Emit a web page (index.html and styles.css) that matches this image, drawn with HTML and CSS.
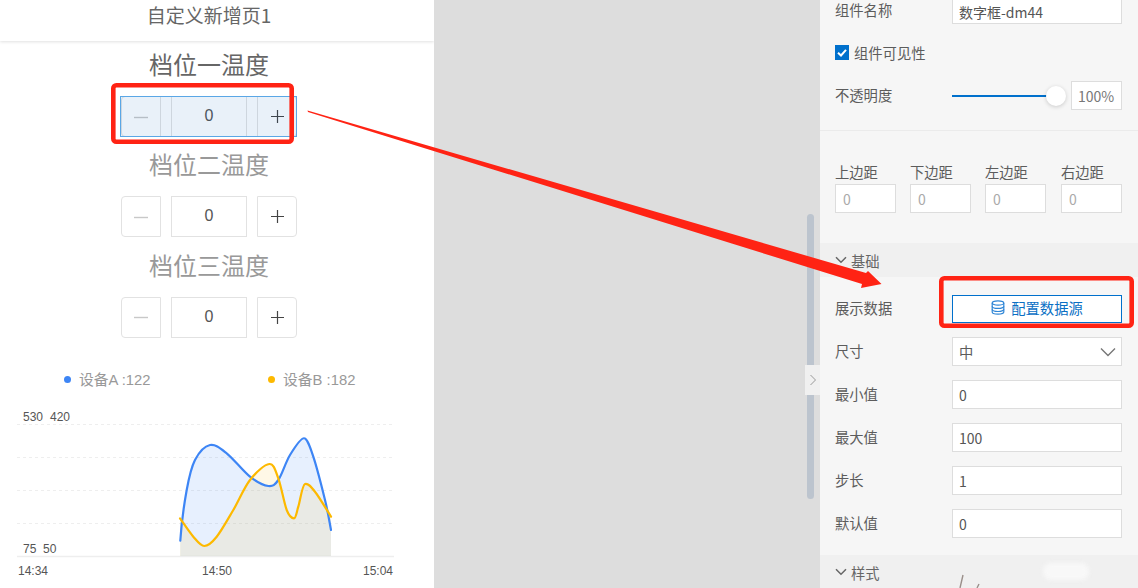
FILE: index.html
```html
<!DOCTYPE html>
<html lang="zh-CN">
<head>
<meta charset="utf-8">
<title>自定义新增页1</title>
<link rel="stylesheet" href="styles.css">
</head>
<body>
<div class="app">
  <main class="preview">
    <header class="title">自定义新增页1</header>
    <div class="form">
      <div class="item">
        <div class="item-label item-label-active">档位一温度</div>
        <div class="stepper">
          <button class="step step-minus"><svg width="14" height="14" viewBox="0 0 14 14"><path d="M0 7.5h14"/></svg></button>
          <input class="step-value" value="0" readonly>
          <button class="step step-plus"><svg width="13" height="13" viewBox="0 0 13 13"><path d="M0 6.5h13M6.5 0v13"/></svg></button>
          <span class="selected"></span>
        </div>
      </div>
      <div class="item">
        <div class="item-label">档位二温度</div>
        <div class="stepper">
          <button class="step step-minus"><svg width="14" height="14" viewBox="0 0 14 14"><path d="M0 7.5h14"/></svg></button>
          <input class="step-value" value="0" readonly>
          <button class="step step-plus"><svg width="13" height="13" viewBox="0 0 13 13"><path d="M0 6.5h13M6.5 0v13"/></svg></button>
        </div>
      </div>
      <div class="item">
        <div class="item-label">档位三温度</div>
        <div class="stepper">
          <button class="step step-minus"><svg width="14" height="14" viewBox="0 0 14 14"><path d="M0 7.5h14"/></svg></button>
          <input class="step-value" value="0" readonly>
          <button class="step step-plus"><svg width="13" height="13" viewBox="0 0 13 13"><path d="M0 6.5h13M6.5 0v13"/></svg></button>
        </div>
      </div>
    </div>
    <div class="legend">
      <div class="legend-item"><i class="dot dot-a"></i>设备A :122</div>
      <div class="legend-item"><i class="dot dot-b"></i>设备B :182</div>
    </div>
    <svg class="chart" viewBox="0 395 434 193" width="434" height="193">
      <g class="grid">
        <line x1="17" x2="394" y1="424.5" y2="424.5"/>
        <line x1="17" x2="394" y1="457.5" y2="457.5"/>
        <line x1="17" x2="394" y1="490.5" y2="490.5"/>
        <line x1="17" x2="394" y1="523.5" y2="523.5"/>
      </g>
      <line class="axis" x1="17" x2="394" y1="556.5" y2="556.5"/>
      <path class="area-a" d="M180.3 540.7C181.4 524 184.25 503.45 186.7 490C189.15 476.55 191.1 467.5 195 460C198.9 452.5 204.7 446.1 210 445C215.3 443.9 220 448 226.7 453.3C233.4 458.6 243.1 471.25 250 476.7C256.9 482.15 263.6 485.45 268.3 486C273 486.55 274.7 485.2 278.3 480C281.9 474.8 285.7 462 290 455C294.3 448 301 437.5 304.3 438.3C307.5 439 309.85 446.4 313.3 456.7C316.75 467 322 487.8 325 500C328 512 329.5 522 331 530L331 556L180.3 556Z"/>
      <path class="area-b" d="M180 518.3C184 524 189.3 532.1 193.3 536.7C197.3 541.3 200.4 546 204.3 546C208.2 546 211.9 542.7 216.7 536.7C221.5 530.7 227.75 519.45 233.3 510C238.85 500.55 244 487.7 250 480C256 472.3 264.6 464.3 269.3 464C274 463.7 275.4 470.6 278.3 478.3C281.2 486 284.1 503.3 286.7 510C289.3 516.7 292 518.3 294 518.3C296 518.3 296.5 512.4 298.3 506.7C300.1 501 302.2 485 305 484C307.8 483 310.7 486.25 315 491.7C319.3 497.15 325 507 331 516.7L331 556L180 556Z"/>
      <path class="line-a" d="M180.3 540.7C181.4 524 184.25 503.45 186.7 490C189.15 476.55 191.1 467.5 195 460C198.9 452.5 204.7 446.1 210 445C215.3 443.9 220 448 226.7 453.3C233.4 458.6 243.1 471.25 250 476.7C256.9 482.15 263.6 485.45 268.3 486C273 486.55 274.7 485.2 278.3 480C281.9 474.8 285.7 462 290 455C294.3 448 301 437.5 304.3 438.3C307.5 439 309.85 446.4 313.3 456.7C316.75 467 322 487.8 325 500C328 512 329.5 522 331 530"/>
      <path class="line-b" d="M180 518.3C184 524 189.3 532.1 193.3 536.7C197.3 541.3 200.4 546 204.3 546C208.2 546 211.9 542.7 216.7 536.7C221.5 530.7 227.75 519.45 233.3 510C238.85 500.55 244 487.7 250 480C256 472.3 264.6 464.3 269.3 464C274 463.7 275.4 470.6 278.3 478.3C281.2 486 284.1 503.3 286.7 510C289.3 516.7 292 518.3 294 518.3C296 518.3 296.5 512.4 298.3 506.7C300.1 501 302.2 485 305 484C307.8 483 310.7 486.25 315 491.7C319.3 497.15 325 507 331 516.7"/>
      <g class="ticks">
        <text x="23" y="421">530</text>
        <text x="50" y="421">420</text>
        <text x="23" y="553">75</text>
        <text x="43" y="553">50</text>
        <text x="18" y="575">14:34</text>
        <text x="202" y="575">14:50</text>
        <text x="363" y="575">15:04</text>
      </g>
    </svg>
  </main>

  <div class="canvas">
    <span class="scroll-thumb"></span>
    <span class="collapse">
      <svg width="8" height="12" viewBox="0 0 8 12"><path d="M1.5 1l5 5-5 5" fill="none" stroke="#999" stroke-width="1"/></svg>
    </span>
  </div>

  <aside class="props">
    <section class="group group-common">
      <div class="row row-name">
        <label class="prop-label">组件名称</label>
        <input class="field field-cut" value="数字框-dm44" readonly>
      </div>
      <div class="check-row">
        <span class="check">
          <svg width="14" height="15" viewBox="0 0 14 15"><path d="M3 7.7l3 2.8 5-5.6" fill="none" stroke="#fff" stroke-width="2"/></svg>
        </span>
        <span class="check-text">组件可见性</span>
      </div>
      <div class="row">
        <label class="prop-label">不透明度</label>
        <div class="slider"><span class="slider-track"></span><span class="slider-thumb"></span></div>
        <input class="field field-percent" value="100%" readonly>
      </div>
    </section>
    <section class="group group-margins">
      <div class="margin"><label class="margin-label">上边距</label><input class="field field-muted" value="0" readonly></div>
      <div class="margin"><label class="margin-label">下边距</label><input class="field field-muted" value="0" readonly></div>
      <div class="margin"><label class="margin-label">左边距</label><input class="field field-muted" value="0" readonly></div>
      <div class="margin"><label class="margin-label">右边距</label><input class="field field-muted" value="0" readonly></div>
    </section>
    <h3 class="section-head">
      <svg width="12" height="8" viewBox="0 0 12 8"><path d="M1 1.2l5 5 5-5" fill="none" stroke="#666" stroke-width="1.5"/></svg>
      基础
    </h3>
    <section class="group group-basic">
      <div class="row">
        <label class="prop-label">展示数据</label>
        <button class="data-btn">
          <svg width="14" height="15" viewBox="0 0 14 15" fill="none" stroke="#2f86d6" stroke-width="1.2">
            <ellipse cx="7" cy="3" rx="5.8" ry="2.2"/>
            <path d="M1.2 3v9c0 1.2 2.6 2.2 5.8 2.2s5.8-1 5.8-2.2V3"/>
            <path d="M1.2 6.2c0 1.2 2.6 2.2 5.8 2.2s5.8-1 5.8-2.2"/>
            <path d="M1.2 9.3c0 1.2 2.6 2.2 5.8 2.2s5.8-1 5.8-2.2"/>
          </svg>
          配置数据源
        </button>
      </div>
      <div class="row">
        <label class="prop-label">尺寸</label>
        <div class="select">
          <span>中</span>
          <svg width="16" height="10" viewBox="0 0 16 10"><path d="M1 1.5l7 7 7-7" fill="none" stroke="#777" stroke-width="1.4"/></svg>
        </div>
      </div>
      <div class="row"><label class="prop-label">最小值</label><input class="field" value="0" readonly></div>
      <div class="row"><label class="prop-label">最大值</label><input class="field" value="100" readonly></div>
      <div class="row"><label class="prop-label">步长</label><input class="field" value="1" readonly></div>
      <div class="row"><label class="prop-label">默认值</label><input class="field" value="0" readonly></div>
    </section>
    <h3 class="section-head">
      <svg width="12" height="8" viewBox="0 0 12 8"><path d="M1 1.2l5 5 5-5" fill="none" stroke="#666" stroke-width="1.5"/></svg>
      样式
    </h3>
  </aside>
</div>

<svg class="annotations" width="1138" height="588" viewBox="0 0 1138 588">
  <rect class="mark" x="113.3" y="85.3" width="178.4" height="56.4" rx="3"/>
  <rect class="mark" x="941.3" y="278.3" width="190.4" height="47.4" rx="3"/>
  <polygon class="arrow" points="307.5,110.5 866,273 868,271 881.5,284 861,288 862,284 308,112"/>
  <path class="scribble" d="M963 575l-3 13M979 584l-2 4"/>
</svg>
<span class="smudge"></span>
</body>
</html>
```

FILE: styles.css
```css
* { box-sizing: border-box; }
html, body { margin: 0; height: 588px; overflow: hidden; }
body {
  position: relative;
  font-family: "Noto Sans CJK SC", "Liberation Sans", sans-serif;
  font-size: 14.3px;
  color: #5c5c5c;
  background: #ddd;
}
input, button { font: inherit; margin: 0; outline: 0; }

.app { display: flex; width: 1138px; height: 588px; }

/* left: mobile preview */
.preview { width: 434px; flex: none; background: #fff; height: 588px; overflow: hidden; }
.title {
  height: 41px;
  line-height: 30px;
  text-align: center;
  font-size: 19px;
  color: #666;
  box-shadow: 0 1px 3px rgba(0, 0, 0, .12);
  padding-right: 16px;
}
.form { padding-top: 6px; }
.item { height: 100.4px; display: flex; flex-direction: column; align-items: center; padding-right: 16px; }
.item-label { height: 36px; line-height: 34px; font-size: 24px; color: #999; margin-bottom: 13px; }
.item-label-active { color: #666; }
.stepper { position: relative; display: flex; gap: 10px; height: 41px; }
.step {
  width: 40px; height: 41px; padding: 0;
  background: #fff;
  border: 1px solid #e2e2e2;
  display: flex; align-items: center; justify-content: center;
}
.step svg { display: block; fill: none; }
.step-minus { border-radius: 4px 0 0 4px; }
.step-minus svg { stroke: #c8c8c8; stroke-width: 1.4; }
.step-plus { border-radius: 0 4px 4px 0; }
.step-plus svg { stroke: #444; stroke-width: 1.2; }
.step-value {
  width: 76px; height: 41px; padding: 0 0 1px;
  border: 1px solid #e2e2e2;
  text-align: center;
  color: #555;
  font-size: 16px;
  font-family: "Liberation Sans", sans-serif;
}
.selected {
  position: absolute;
  left: -1px; right: 0; top: 0; height: 41px;
  background: rgba(0, 90, 180, .085);
  border: 1px solid #5aa7e6;
}
.legend {
  display: flex;
  padding: 21.8px 0 0 64px;
  height: 46.8px;
  line-height: 20px;
  color: #999;
  font-family: "Liberation Sans", "Noto Sans CJK SC", sans-serif;
  font-size: 14.8px;
}
.legend-item { width: 204px; flex: none; display: flex; align-items: center; height: 20px; }
.dot { width: 7px; height: 7px; border-radius: 50%; margin-right: 8px; }
.dot-a { background: #3d85f5; }
.dot-b { background: #fdb900; }
.chart { display: block; }
.grid line { stroke: #eee; stroke-width: 1; stroke-dasharray: 3 3; }
.axis { stroke: #eee; stroke-width: 1.5; }
.area-a { fill: rgba(61, 133, 245, .12); }
.area-b { fill: rgba(255, 190, 10, .1); }
.line-a, .line-b { fill: none; stroke-width: 2.2; stroke-linecap: round; }
.line-a { stroke: #3d85f5; }
.line-b { stroke: #fdb900; }
.ticks text { font-family: "Liberation Sans", sans-serif; font-size: 12px; fill: #555; }

/* middle: canvas gutter */
.canvas { position: relative; width: 386px; flex: none; background: #ddd; }
.scroll-thumb {
  position: absolute; left: 373px; top: 214px;
  width: 7px; height: 285px;
  border-radius: 4px;
  background: #bcc4ce;
}
.collapse {
  position: absolute; left: 371px; top: 365px;
  width: 15px; height: 30px;
  background: #f0f0f0;
  display: flex; align-items: center; justify-content: center;
}

/* right: properties */
.props { width: 318px; flex: none; background: #f6f6f6; height: 588px; overflow: hidden; }
.group { padding: 0 16px 0 15px; }
.row { display: flex; align-items: center; height: 29px; }
.row-name { height: 24px; align-items: flex-start; }
.prop-label { width: 117px; flex: none; line-height: 20px; padding-bottom: 2px; }
.field {
  width: 170px; height: 29px;
  border: 1px solid #ddd;
  background: #fff;
  padding: 0 6px;
  color: #555;
  font-size: 14px;
  font-family: "Noto Sans CJK SC", "Liberation Sans", sans-serif;
}
.field-cut { height: 24px; border-top: 0; }
.group-common { height: 131px; border-bottom: 1px solid #ebebeb; }
.check-row { display: flex; align-items: flex-start; height: 16px; margin: 21px 0 20px; }
.check { width: 14px; height: 15px; background: #0070cc; display: block; margin-right: 5px; flex: none; }
.check svg { display: block; }
.check-text { line-height: 16px; }
.slider { position: relative; width: 119px; height: 20px; flex: none; }
.slider-track { position: absolute; left: 0; top: 9px; width: 95px; height: 2px; background: #0070cc; }
.slider-thumb {
  position: absolute; left: 94px; top: 0;
  width: 20px; height: 20px; border-radius: 50%;
  background: #fff;
  box-shadow: 0 1px 4px rgba(0, 0, 0, .18);
}
.field-percent { width: 51px; padding: 0 0 0 6px; color: #777; }
.group-margins { display: flex; gap: 14px; padding-top: 31px; height: 112px; }
.margin { width: 61px; flex: none; }
.margin:last-child { margin-left: 1px; }
.margin-label { display: block; line-height: 20px; margin-bottom: 2px; white-space: nowrap; }
.field-muted { width: 61px; padding: 0 7px; color: #aaa; }
.section-head {
  margin: 0; height: 34px;
  display: flex; align-items: center; gap: 4px;
  padding-left: 15px;
  background: #f0f0f0;
  font-size: 14.3px; font-weight: 400; color: #666;
}
.group-basic { display: flex; flex-direction: column; gap: 14px; padding-top: 17px; padding-bottom: 17px; }
.data-btn {
  width: 170px; height: 28px;
  border: 1px solid #0070cc;
  background: #fff;
  color: #0a6fc4;
  display: flex; align-items: center; justify-content: center; gap: 6px;
  padding: 0 0 2px;
}
.select {
  width: 170px; height: 29px;
  border: 1px solid #ddd;
  background: #fff;
  display: flex; align-items: center; justify-content: space-between;
  padding: 0 5px 0 6px;
}

/* hand-drawn annotations on top of the screenshot */
.annotations { position: absolute; left: 0; top: 0; pointer-events: none; }
.mark { fill: none; stroke: #ff2314; stroke-width: 4.6; }
.arrow { fill: #ff2314; }
.scribble { stroke: #9a8f8a; stroke-width: 1.4; fill: none; }
.smudge {
  position: absolute; left: 1043px; top: 563px;
  width: 46px; height: 17px;
  border-radius: 8px;
  background: #f8f8f8;
  filter: blur(2px);
}
```
